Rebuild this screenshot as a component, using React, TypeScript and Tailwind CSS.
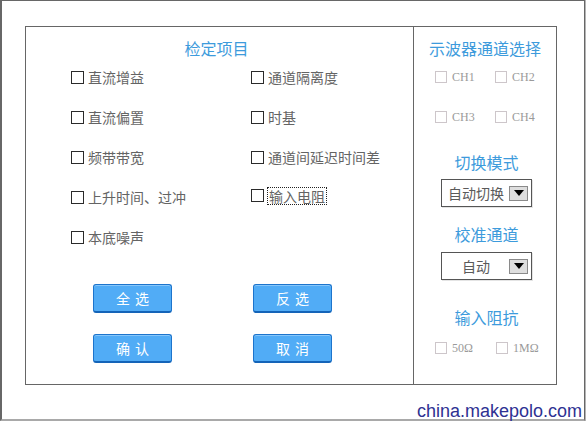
import React from "react";

const cjk = { fontFamily: '"Noto Sans CJK SC", "Noto Sans", sans-serif' };
const serif = { fontFamily: '"Liberation Serif", "Noto Sans CJK SC", serif' };

function Check({ label, focus }: { label: string; focus?: boolean }) {
  return (
    <div className="flex items-center h-[40px]">
      <div className={`w-[13px] h-[13px] border border-[#2a2a2a] shrink-0 ${focus ? "-mt-[4px]" : ""}`} />
      <span
        className={`ml-[4px] text-[14px] leading-[16px] text-[#646464] ${focus ? "outline outline-1 outline-dotted outline-[#222] px-[1px] -mt-[2px]" : ""}`}
      >
        {label}
      </span>
    </div>
  );
}

function LightCheck({ label }: { label: string }) {
  return (
    <div className="flex items-center">
      <div className="w-[12px] h-[12px] border border-[#cdc6ca] shrink-0" />
      <span className="ml-[5px] text-[12px] leading-[14px] text-[#9a9a9a]" style={serif}>
        {label}
      </span>
    </div>
  );
}

function Btn({ a, b }: { a: string; b: string }) {
  return (
    <div className="w-[79px] h-[29px] bg-[#51acf6] border border-[#1d74cc] border-b-2 border-b-[#1464b8] rounded-[3px] shadow-[inset_0_1px_0_#86c6fa] flex items-center justify-center gap-[5px] text-white text-[14px]">
      <span>{a}</span>
      <span>{b}</span>
    </div>
  );
}

function Select({ label }: { label: string }) {
  return (
    <div className="w-[91px] h-[28px] border border-[#555] bg-white flex items-center shadow-[1px_1px_0_#e4e4e4]">
      <div className="flex-1 text-center text-[14px] text-[#5a5a5a] pl-[1px]">{label}</div>
      <div className="w-[19px] h-[15px] mr-[3px] bg-[#dedede] border border-[#8a8a8a] flex items-center justify-center">
        <div className="w-0 h-0 border-l-[5px] border-r-[5px] border-t-[6px] border-l-transparent border-r-transparent border-t-black" />
      </div>
    </div>
  );
}

export default function App() {
  const left = ["直流增益", "直流偏置", "频带带宽", "上升时间、过冲", "本底噪声"];
  const right = ["通道隔离度", "时基", "通道间延迟时间差", "输入电阻"];
  return (
    <div className="relative w-[587px] h-[422px] bg-white overflow-hidden" style={cjk}>
      <div className="w-[585px] h-[421px] border-l-2 border-t border-r border-[#676767] border-b-2 border-b-[#a9a9a9] shadow-[1px_0_0_#b4b4b4]">
        <div className="ml-[23px] mt-[25px] w-[532px] h-[359px] border border-[#666] flex">
          {/* Left panel */}
          <div className="w-[387px] flex flex-col">
            <div className="pt-[12px] h-[31px] text-center text-[16px] leading-[19px] text-[#3d9bdc] pr-[6px]">
              检定项目
            </div>
            <div className="grid grid-cols-[180px_1fr] pl-[45px] -mt-[1px]">
              <div className="flex flex-col">
                {left.map((l) => (
                  <Check key={l} label={l} />
                ))}
              </div>
              <div className="flex flex-col">
                {right.map((l) => (
                  <Check key={l} label={l} focus={l === "输入电阻"} />
                ))}
              </div>
            </div>
            <div className="pl-[67px] mt-[27px] flex flex-col gap-[21px]">
              <div className="flex gap-[81px]">
                <Btn a="全" b="选" />
                <Btn a="反" b="选" />
              </div>
              <div className="flex gap-[81px]">
                <Btn a="确" b="认" />
                <Btn a="取" b="消" />
              </div>
            </div>
          </div>
          {/* Right panel */}
          <div className="flex-1 border-l border-[#666] flex flex-col items-center">
            <div className="pt-[12px] h-[31px] text-[16px] leading-[19px] text-[#3d9bdc]">示波器通道选择</div>
            <div className="self-start pl-[21px] grid grid-cols-[60px_60px] -mt-[1px]">
              <div className="h-[40px] flex items-center"><LightCheck label="CH1" /></div>
              <div className="h-[40px] flex items-center"><LightCheck label="CH2" /></div>
              <div className="h-[40px] flex items-center"><LightCheck label="CH3" /></div>
              <div className="h-[40px] flex items-center"><LightCheck label="CH4" /></div>
            </div>
            <div className="mt-[15px] h-[20px] text-[16px] leading-[20px] text-[#3d9bdc] pl-[3px]">切换模式</div>
            <div className="mt-[7px] pl-[3px]">
              <Select label="自动切换" />
            </div>
            <div className="mt-[17px] h-[20px] text-[16px] leading-[20px] text-[#3d9bdc] pl-[3px]">校准通道</div>
            <div className="mt-[8px] pl-[3px]">
              <Select label="自动" />
            </div>
            <div className="mt-[27px] h-[20px] text-[16px] leading-[20px] text-[#3d9bdc] pl-[3px]">输入阻抗</div>
            <div className="mt-[11px] h-[20px] self-start pl-[21px] grid grid-cols-[61px_60px] items-center">
              <LightCheck label="50Ω" />
              <LightCheck label="1MΩ" />
            </div>
          </div>
        </div>
      </div>
      <div
        className="absolute left-[417px] top-[402px] text-[18px] leading-[18px] text-[#2e3192] whitespace-nowrap"
        style={{ fontFamily: '"Liberation Sans", Arial, sans-serif' }}
      >
        china.makepolo.com
      </div>
    </div>
  );
}
